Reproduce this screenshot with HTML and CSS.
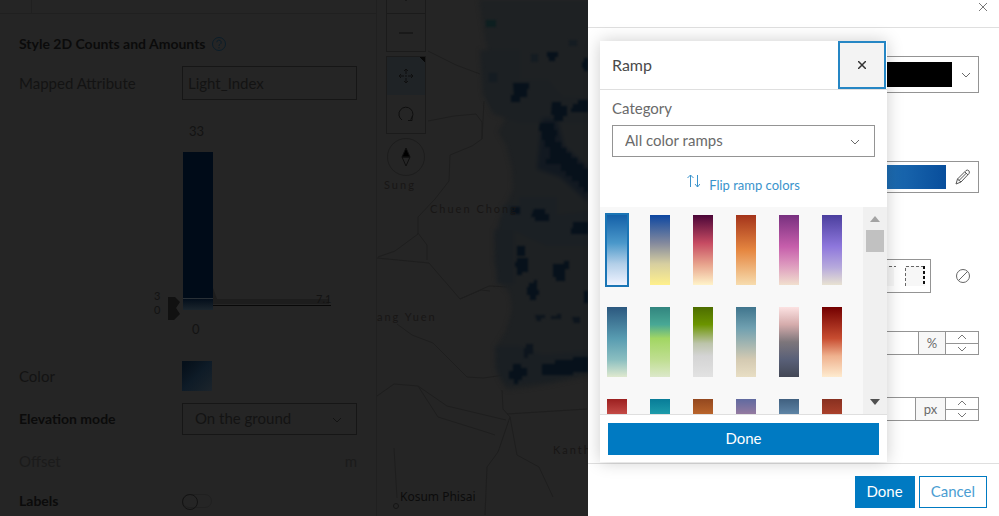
FILE: index.html
```html
<!DOCTYPE html>
<html lang="en">

<head>
    <meta charset="UTF-8">
    <meta name="viewport" content="width=device-width, initial-scale=1.0">
    <title>Style 2D Counts and Amounts</title>
    <link rel="stylesheet" href="styles.css">
</head>

<body>
    <aside class="sidebar">
        <div class="sidebar-top"></div>
        <div class="sidebar-content">
            <h2 class="sidebar-title">Style 2D Counts and Amounts
                <svg width="16" height="16" viewBox="0 0 16 16" fill="none" stroke="currentColor">
                    <circle cx="8" cy="8" r="6.5" />
                    <path d="M5.8 6.3a2.2 2.2 0 1 1 3.2 2c-.8.4-1 .8-1 1.700M8 11v1.300" />
                </svg>
            </h2>
            <div class="row row-attribute">
                <label for="attribute">Mapped Attribute</label>
                <input class="text-input" id="attribute" type="text" value="Light_Index">
            </div>

            <!-- color slider with histogram -->
            <svg class="histogram" viewBox="0 0 338 237" height="237">
                <defs>
                    <linearGradient id="barFill" x1="0" y1="0" x2="0" y2="1">
                        <stop offset="0" stop-color="#000b18" />
                        <stop offset="0.92" stop-color="#000b18" />
                        <stop offset="1" stop-color="#1b252d" />
                    </linearGradient>
                </defs>
                <text x="170" y="24">33</text>
                <rect x="164" y="40" width="30" height="158" fill="url(#barFill)" />
                <path d="M164 186.500h30" stroke="#293036" />
                <path d="M194 176l4 11h112v5H194z" fill="#1d1d1d" />
                <path d="M194 193.500h118" stroke="#080808" />
                <path d="M149 185h7l5 5-4 6 4 6-6 6h-6z" fill="#111" />
                <text class="handle-value" x="135" y="188">3</text>
                <text class="handle-value" x="135" y="202">0</text>
                <text class="handle-value" x="297" y="191">7.1</text>
                <text x="173" y="222">0</text>
            </svg>

            <div class="row row-color">
                <span>Color</span>
                <button class="color-swatch" aria-label="Color"></button>
            </div>
            <div class="row row-elevation">
                <label class="strong" for="elevation">Elevation mode</label>
                <div class="select-wrap">
                    <select id="elevation">
                        <option>On the ground</option>
                    </select>
                    <svg class="chevron" width="10" height="6" viewBox="0 0 10 6"><path d="M1 1l4 4 4-4" /></svg>
                </div>
            </div>
            <div class="row row-small faded">
                <span>Offset</span>
                <span class="unit">m</span>
            </div>
            <div class="row row-small">
                <label class="strong" for="labels">Labels</label>
                <input class="toggle" id="labels" type="checkbox">
            </div>
        </div>
    </aside>

    <section class="map">
        <svg class="map-canvas" viewBox="0 0 211 516" preserveAspectRatio="xMinYMin slice">
            <defs>
                <filter id="soft" color-interpolation-filters="sRGB"><feGaussianBlur stdDeviation="2" /></filter>
                <filter id="edge" color-interpolation-filters="sRGB"><feGaussianBlur stdDeviation="0.8" /></filter>
            </defs>
            <g fill="none" stroke="#1e1e1e">
                <path d="M51 121l26-5 22-2 6 8v17l-10 7-22 9-1 26-14 18-17 18v17l-23 17-17 6" />
                <path d="M51 51l28 14 24 9M105 139l2-38M41 233l9 12v15M0 258l52 5 31 36 21-9 9 1" />
                <path d="M20 324l15 11 21 8 34 34 16 1 22-3M83 299l29-13 21 1" />
                <path d="M0 396l17-12 24 2 20 31 48 15 9 3M41 386l29 20 59 14M17 448l3 50" />
                <path d="M125 390l1 19 7 8-12 35-11 15-2 48M133 417l7 38 22 12 14 30M130 414l80-5" />
            </g>
            <!-- light index raster -->
            <g filter="url(#soft)">
                <path d="M102 0h115v375l-44 9-25 4-18 2-8-12-4-15 2-18 9-15 6-20-2-16-10-12-6-20 1-29 7-20 11-24-1-20-6-24-8-13 8-14 5-24-17-5-6-14 2-17-5-19z" fill="#1e2123" />
                <path d="M126 205h16v-8h38v18l31-4v35h-41l-31-14-17-3z" fill="#1b2024" />
                <path d="M103 50h40v30h28l14 17h26v26h-68l-27-9-10-20z" fill="#1c2023" />
                <path d="M118 346h24l24 9 45-4v22l-38 8-43 4-11-15z" fill="#1a1f23" />
                <path d="M117 230h20v54h-17z" fill="#1a1f23" />
                <path d="M165 118h15l7 28 24 21v35l-28-25-23-8z" fill="#121921" />
            </g>
            <g class="raster-cells" filter="url(#edge)">
                <path d="M109 20h10v7h-10z" fill="#0d1f20" />
                <path d="M112 73h8v9h-8zM192 40h8v6h-8zM154 54h7v8h-7z" fill="#151c22" />
                <path d="M136 83h16v6h-2v8h-7v5h-9v-7h3z" />
                <path d="M170 52h11v5h-3v4h-6v-4h-2zM207 58h4v13h-4v-3h-2v-6h2z" />
                <path d="M175 102h9v4h6v10h-4v5h-9v-6h-3zM196 104h5v-4h10v12h-17v-4h2z" />
                <path d="M163 123h14v7h3v6h-2v6h6v6h5v5h5v5h6v6h6v5h5v23h-4v-5h-5v-6h-7v-5h-6v-5h-5v-7h-15v-5h4v-12h-5v-7h-3v-9h-3z" />
                <path d="M134 207h9v7h-9zM157 209h11v5h4v7h-14v-4h-4zM196 222h15v12h-17v-6h2z" />
                <path d="M140 246h8v10h-8zM140 258h11v14h-6v3h-5v-8h-2v-5h2z" />
                <path d="M176 264h11v-3h5v8h-4v12h-9v-4h-3zM152 283h5v-3h3v10h2v5h-3v5h-6v-5h-3v-8h2zM207 291h4v12h-4z" />
                <path d="M158 315h10v3h-4v3h-4zM174 316h6v-2h4v5h-10zM195 317h8v6h-6z" fill="#0d151d" />
                <path d="M149 344h7v10h-5v4h-4v-10h2z" fill="#0d151d" />
                <path d="M136 364h8v4h6v8h-5v4h-4v4h-4v-5h-5v-8h4zM165 364h13v-4h18v-3h15v15h-15v3h-31z" />
            </g>
            <g class="map-labels">
                <text x="7" y="189">Sung</text>
                <text x="53" y="213">Chuen Chong</text>
                <text x="0" y="321">ang Yuen</text>
                <text x="176" y="454">Kanth</text>
                <text class="town" x="23" y="501">Kosum Phisai</text>
            </g>
            <circle cx="19" cy="506" r="2.500" fill="none" stroke="#151515" />
        </svg>

        <div class="map-tools">
            <div class="tool-group tool-zoom">
                <button aria-label="Zoom in"><svg width="16" height="16" viewBox="0 0 16 16"><path d="M8 1v14M1 8h14" /></svg></button>
                <button aria-label="Zoom out"><svg width="16" height="16" viewBox="0 0 16 16"><path d="M1 8h14" /></svg></button>
            </div>
            <div class="tool-group">
                <button class="active" aria-label="Pan"><svg width="16" height="16" viewBox="0 0 16 16"><path d="M8 1v5M8 10v5M1 8h5M10 8h5M6 3l2-2 2 2M6 13l2 2 2-2M3 6L1 8l2 2M13 6l2 2-2 2M7 8h2" /></svg></button>
                <button aria-label="Rotate"><svg width="16" height="16" viewBox="0 0 16 16"><path d="M4 14a7 7 0 1 1 8.500-.5M10 14.500h4v-4" /></svg></button>
            </div>
            <button class="compass" aria-label="Compass">
                <svg width="10" height="20" viewBox="0 0 10 20"><path d="M5 1L1 10h8z" fill="#000" /><path d="M1 10l4 9 4-9z" /></svg>
            </button>
        </div>
    </section>

    <main class="dialog">
        <header class="dialog-header">
            <button class="close-btn" aria-label="Close dialog">
                <svg width="8" height="8" viewBox="0 0 8 8"><path d="M0 0l8 8M8 0L0 8" /></svg>
            </button>
        </header>

        <div class="dialog-body">
            <button class="picker picker-color" aria-label="Fill color">
                <span class="picker-fill black"></span>
                <svg class="chevron" width="10" height="6" viewBox="0 0 10 6"><path d="M1 1l4 4 4-4" /></svg>
            </button>
            <button class="picker picker-ramp" aria-label="Edit color ramp">
                <span class="picker-fill blue"></span>
                <svg width="16" height="16" viewBox="0 0 16 16" fill="none" stroke="#555"><path d="M1 15l1.500-5L11 1.500q1.500-1 2.800.2 1.200 1.300.2 2.800L6 13zM2.500 10L6 13M10 3l3 3M4 11.500l7.500-7.500" /></svg>
            </button>
            <div class="outline-row">
                <button class="picker picker-outline" aria-label="Outline style">
                    <svg width="64" height="22" viewBox="0 0 64 22">
                        <path d="M12 1h20v20H12zM43 1h20v20H43z" fill="#f7f7f7" />
                        <path d="M12 1.500h22M43.500 21V1.500H62" fill="none" stroke="#666" stroke-dasharray="3 2" />
                        <path d="M62 1v20" stroke="#111" stroke-width="2" stroke-dasharray="3 2" />
                    </svg>
                </button>
                <button class="none-btn" aria-label="No outline">
                    <svg width="16" height="16" viewBox="0 0 16 16" fill="none" stroke="#666"><circle cx="8" cy="8" r="6.500" /><path d="M3.500 12.500l9-9" /></svg>
                </button>
            </div>
            <div class="stepper stepper-percent">
                <input type="text" aria-label="Transparency">
                <span class="stepper-unit">%</span>
                <div class="stepper-buttons">
                    <button aria-label="Increase transparency"><svg width="10" height="6" viewBox="0 0 10 6"><path d="M1 5l4-4 4 4" /></svg></button>
                    <button aria-label="Decrease transparency"><svg width="10" height="6" viewBox="0 0 10 6"><path d="M1 1l4 4 4-4" /></svg></button>
                </div>
            </div>
            <div class="stepper stepper-width">
                <input type="text" aria-label="Outline width">
                <span class="stepper-unit wide">px</span>
                <div class="stepper-buttons">
                    <button aria-label="Increase width"><svg width="10" height="6" viewBox="0 0 10 6"><path d="M1 5l4-4 4 4" /></svg></button>
                    <button aria-label="Decrease width"><svg width="10" height="6" viewBox="0 0 10 6"><path d="M1 1l4 4 4-4" /></svg></button>
                </div>
            </div>
        </div>

        <footer class="dialog-footer">
            <button class="btn btn-primary">Done</button>
            <button class="btn btn-outline">Cancel</button>
        </footer>

        <section class="popover">
            <div class="popover-header">
                <h3>Ramp</h3>
                <button class="popover-close" aria-label="Close ramp">
                    <svg width="8" height="8" viewBox="0 0 8 8"><path d="M0 0l8 8M8 0L0 8" /></svg>
                </button>
            </div>
            <div class="popover-form">
                <label for="category">Category</label>
                <div class="select-wrap">
                    <select id="category">
                        <option>All color ramps</option>
                    </select>
                    <svg class="chevron" width="10" height="6" viewBox="0 0 10 6"><path d="M1 1l4 4 4-4" /></svg>
                </div>
                <button class="flip-btn">
                    <svg width="13" height="14" viewBox="0 0 13 14" fill="none" stroke="currentColor"><path d="M3.500 13V1M.5 4l3-3 3 3M10.500 1v12M8 10l2.500 3L13 10" /></svg>
                    <span>Flip ramp colors</span>
                </button>
            </div>
            <div class="ramp-area">
                <div class="ramps">
                    <button class="ramp ramp-1 selected" aria-label="Ramp 1"></button>
                    <button class="ramp ramp-2" aria-label="Ramp 2"></button>
                    <button class="ramp ramp-3" aria-label="Ramp 3"></button>
                    <button class="ramp ramp-4" aria-label="Ramp 4"></button>
                    <button class="ramp ramp-5" aria-label="Ramp 5"></button>
                    <button class="ramp ramp-6" aria-label="Ramp 6"></button>
                    <button class="ramp ramp-7" aria-label="Ramp 7"></button>
                    <button class="ramp ramp-8" aria-label="Ramp 8"></button>
                    <button class="ramp ramp-9" aria-label="Ramp 9"></button>
                    <button class="ramp ramp-10" aria-label="Ramp 10"></button>
                    <button class="ramp ramp-11" aria-label="Ramp 11"></button>
                    <button class="ramp ramp-12" aria-label="Ramp 12"></button>
                    <button class="ramp ramp-13" aria-label="Ramp 13"></button>
                    <button class="ramp ramp-14" aria-label="Ramp 14"></button>
                    <button class="ramp ramp-15" aria-label="Ramp 15"></button>
                    <button class="ramp ramp-16" aria-label="Ramp 16"></button>
                    <button class="ramp ramp-17" aria-label="Ramp 17"></button>
                    <button class="ramp ramp-18" aria-label="Ramp 18"></button>
                </div>
                <div class="scrollbar">
                    <svg width="10" height="6" viewBox="0 0 10 6"><path d="M0 6l5-6 5 6z" fill="#a3a3a3" /></svg>
                    <span class="scroll-thumb"></span>
                    <svg class="scroll-down" width="10" height="6" viewBox="0 0 10 6"><path d="M0 0l5 6 5-6z" fill="#505050" /></svg>
                </div>
            </div>
            <div class="popover-footer">
                <button class="btn btn-primary">Done</button>
            </div>
        </section>
    </main>
</body>

</html>
```
FILE: styles.css
```css
* {
    margin: 0;
    padding: 0;
    box-sizing: border-box;
}

body {
    display: flex;
    min-height: 100vh;
    background: #252525;
    color: #6a6a6a;
    font-family: Lato, 'Noto Sans', sans-serif;
    font-size: 15px;
    line-height: 20px;
}

button,
input,
select {
    font: inherit;
    color: inherit;
    background: none;
    border: none;
    border-radius: 0;
}

button {
    display: flex;
    align-items: center;
    justify-content: center;
    cursor: pointer;
}

svg {
    display: block;
    flex-shrink: 0;
}

/* Sidebar */
.sidebar {
    flex: 0 0 377px;
    border-right: 1px solid #202020;
    color: #131313;
}

.sidebar-top {
    height: 14px;
    border-bottom: 1px solid #202020;
    background: linear-gradient(#202020, #202020) 31px 0 / 1px 100% no-repeat;
}

.sidebar-content {
    display: flex;
    flex-direction: column;
    gap: 12px;
    padding: 20px 19px 0;
}

.sidebar-title {
    display: flex;
    align-items: center;
    gap: 5px;
    font-size: 14px;
    color: #0b0b0b;
}

.sidebar-title svg {
    color: #0b1d29;
}

.row {
    display: grid;
    grid-template-columns: 163px 1fr;
    align-items: center;
}

.row-attribute {
    height: 34px;
}

.row-color {
    height: 30px;
}

.row-elevation {
    height: 32px;
}

.row-small {
    height: 28px;
}

.strong {
    font-size: 14px;
    font-weight: bold;
    color: #0b0b0b;
}

.faded {
    color: #1b1b1b;
}

.unit {
    text-align: right;
}

.text-input {
    width: 100%;
    height: 100%;
    padding: 0 5px;
    border: 1px solid #161616;
}

.histogram {
    width: 100%;
    font-size: 13px;
    fill: #131313;
}

.handle-value {
    font-size: 11px;
}

.color-swatch {
    width: 30px;
    height: 30px;
    background: linear-gradient(135deg, #06101a 10%, #0e1b27 50%, #1c242b);
}

.toggle {
    appearance: none;
    width: 30px;
    height: 14px;
    border: 1px solid #202020;
    border-radius: 7px;
}

.toggle::before {
    content: '';
    display: block;
    width: 14px;
    height: 14px;
    margin: -1px;
    border: 1px solid #131313;
    border-radius: 50%;
}

.select-wrap {
    position: relative;
    height: 32px;
}

.select-wrap select {
    appearance: none;
    width: 100%;
    height: 100%;
    padding: 0 12px 2px;
    border: 1px solid #949494;
}

.sidebar .select-wrap select {
    border-color: #161616;
}

.chevron {
    fill: none;
    stroke: currentColor;
}

.select-wrap .chevron {
    position: absolute;
    right: 15px;
    top: 14px;
    pointer-events: none;
}

/* Map */
.map {
    position: relative;
    flex: 1;
    min-width: 0;
    overflow: hidden;
}

.map-canvas {
    width: 100%;
    height: 100%;
    position: absolute;
}

.raster-cells {
    fill: #07111b;
}

.map-labels {
    font-size: 11px;
    letter-spacing: 2px;
    fill: #181615;
}

.map-labels .town {
    font-family: 'Noto Sans', sans-serif;
    font-size: 12px;
    letter-spacing: 0;
    fill: #0c0c0c;
}

.map-tools {
    position: absolute;
    left: 9px;
    top: -26px;
    display: flex;
    flex-direction: column;
    gap: 4px;
}

.tool-group {
    border: 1px solid #1b1b1b;
    background: #252525;
}

.map-tools button {
    width: 38px;
    height: 38px;
}

.tool-zoom button + button {
    border-top: 1px solid #1b1b1b;
}

.map-tools svg {
    fill: none;
    stroke: #0f0f0f;
}

.map-tools .active {
    background: linear-gradient(225deg, #080808 4px, #1f2326 4px);
}

.map-tools .compass {
    margin-left: 1px;
    border: 1px solid #1d1d1d;
    border-radius: 50%;
    background: #252525;
}

/* Dialog */
.dialog {
    position: relative;
    display: flex;
    flex: 0 0 411px;
    flex-direction: column;
    background: #fff;
}

.dialog-header {
    display: flex;
    justify-content: flex-end;
    height: 28px;
    padding: 3px 12px;
    border-bottom: 1px solid #dfdfdf;
}

.close-btn {
    height: 8px;
}

.close-btn svg {
    stroke: #777;
}

.dialog-body {
    flex: 1;
    padding: 28px 20px 0 12px;
}

.picker {
    width: 100%;
    border: 1px solid #949494;
}

.picker-color {
    height: 37px;
    padding: 5px 7px;
    gap: 9px;
}

.picker-ramp {
    height: 32px;
    margin-top: 68px;
    padding: 3px 7px;
    gap: 9px;
}

.picker-fill {
    flex: 1;
    height: 100%;
}

.black {
    background: #000;
}

.blue {
    background: linear-gradient(90deg, #eff3ff, #2171b5 80%, #084e9c);
}

.outline-row {
    display: flex;
    align-items: center;
    gap: 24px;
    margin-top: 66px;
    padding-right: 8px;
}

.picker-outline {
    flex: 1;
    height: 34px;
    padding: 0 4px;
    justify-content: flex-end;
}

.stepper {
    display: flex;
    height: 24px;
    border: 1px solid #949494;
}

.stepper-percent {
    margin-top: 38px;
}

.stepper-width {
    margin-top: 42px;
}

.stepper input {
    flex: 1;
    min-width: 0;
}

.stepper-unit {
    display: flex;
    align-items: center;
    justify-content: center;
    width: 27px;
    border-left: 1px solid #949494;
    background: #f7f7f7;
    font-size: 13px;
}

.stepper-unit.wide {
    width: 30px;
}

.stepper-buttons {
    display: flex;
    flex-direction: column;
    width: 33px;
    border-left: 1px solid #949494;
}

.stepper-buttons button {
    flex: 1;
}

.stepper-buttons button + button {
    border-top: 1px solid #949494;
}

.stepper-buttons svg {
    fill: none;
    stroke: #777;
}

.dialog-footer {
    display: flex;
    justify-content: flex-end;
    gap: 4px;
    height: 53px;
    padding: 12px 12px 9px;
    border-top: 1px solid #dfdfdf;
}

.btn {
    height: 32px;
    padding: 0 11px 2px;
    border: 1px solid #007ac2;
}

.btn-primary {
    background: #007ac2;
    color: #fff;
}

.btn-outline {
    background: #fff;
    color: #4a9dd2;
}

/* Ramp popover */
.popover {
    position: absolute;
    left: 12px;
    top: 41px;
    width: 287px;
    background: #fff;
    box-shadow: 0 0 16px rgba(0, 0, 0, 0.2);
}

.popover-header {
    display: flex;
    align-items: center;
    justify-content: space-between;
    height: 49px;
    padding: 0 1px 0 12px;
    border-bottom: 1px solid #dfdfdf;
}

.popover-header h3 {
    font-size: 16px;
    font-weight: normal;
    color: #4a4a4a;
}

.popover-close {
    width: 48px;
    height: 48px;
    border: 2px solid #2586c4;
    background: #f3f3f3;
}

.popover-close svg {
    stroke: #333;
    stroke-width: 1.5;
}

.popover-form {
    padding: 8px 12px 12px;
}

.popover-form label {
    display: block;
    margin-bottom: 7px;
}

.flip-btn {
    gap: 9px;
    width: 100%;
    margin-top: 14px;
    height: 24px;
    color: #3a93cc;
    font-size: 13px;
}

.flip-btn span {
    padding-top: 3px;
}

.flip-btn svg {
    margin-bottom: 4px;
}

.ramp-area {
    display: flex;
    height: 207px;
    background: #f8f8f8;
}

.ramps {
    display: grid;
    flex: 1;
    grid-template-columns: repeat(6, 20px);
    grid-auto-rows: 70px;
    gap: 22px 23px;
    padding: 8px 7px;
    overflow: hidden;
}

.selected {
    outline: 2px solid #1a75b5;
}

.ramp-1 { background: linear-gradient(#1460a8, #4a98ca 40%, #b3cfe8 70%, #eff3ff); }
.ramp-2 { background: linear-gradient(#0d47a1, #83899d 40%, #d7cfa0 70%, #fff08c); }
.ramp-3 { background: linear-gradient(#4b0638, #c64b62 40%, #e7a28c 70%, #fff3c9); }
.ramp-4 { background: linear-gradient(#a4341b, #e58640 50%, #f7dcae); }
.ramp-5 { background: linear-gradient(#78307f, #c65eab 45%, #dc96bd 70%, #f1dfce); }
.ramp-6 { background: linear-gradient(#4b3f9e, #8e77dc 45%, #b7aadc 75%, #e8e2d2); }
.ramp-7 { background: linear-gradient(#2c587f, #589cb1 45%, #8abec0 75%, #dfe9cf); }
.ramp-8 { background: linear-gradient(#32857f, #48a895 25%, #a2d663 45%, #bfde91 75%, #dce8ca); }
.ramp-9 { background: linear-gradient(#4d6d00, #6b9400 25%, #bcc4aa 52%, #d4d4d4 70%, #e2e2e2); }
.ramp-10 { background: linear-gradient(#40758d, #70a0b0 30%, #d4cab2 75%, #e8dec4); }
.ramp-11 { background: linear-gradient(#fce2e2, #d5acac 25%, #7d767b 50%, #596078 75%, #434755); }
.ramp-12 { background: linear-gradient(#730000, #c84d31 45%, #efb18e 70%, #feebcf); }
.ramp-13 { background: linear-gradient(#9c2020, #d45c56 30%, #f0c0b0); }
.ramp-14 { background: linear-gradient(#087c98, #26a8b2 30%, #b0e0d8); }
.ramp-15 { background: linear-gradient(#94481f, #c87030 30%, #f0d090); }
.ramp-16 { background: linear-gradient(#606aa0, #a880a0 30%, #e0c0b0); }
.ramp-17 { background: linear-gradient(#406080, #6a92b4 30%, #d0e0f0); }
.ramp-18 { background: linear-gradient(#883020, #b84830 30%, #f0c090); }

.scrollbar {
    display: flex;
    flex-direction: column;
    align-items: center;
    width: 24px;
    padding: 9px 0;
    background: #f0f0f0;
}

.scroll-thumb {
    width: 18px;
    height: 22px;
    margin-top: 8px;
    background: #c1c1c1;
}

.scroll-down {
    margin-top: auto;
}

.popover-footer {
    padding: 8px 8px 7px;
    border-top: 1px solid #dfdfdf;
}

.popover-footer .btn {
    width: 100%;
}
```
